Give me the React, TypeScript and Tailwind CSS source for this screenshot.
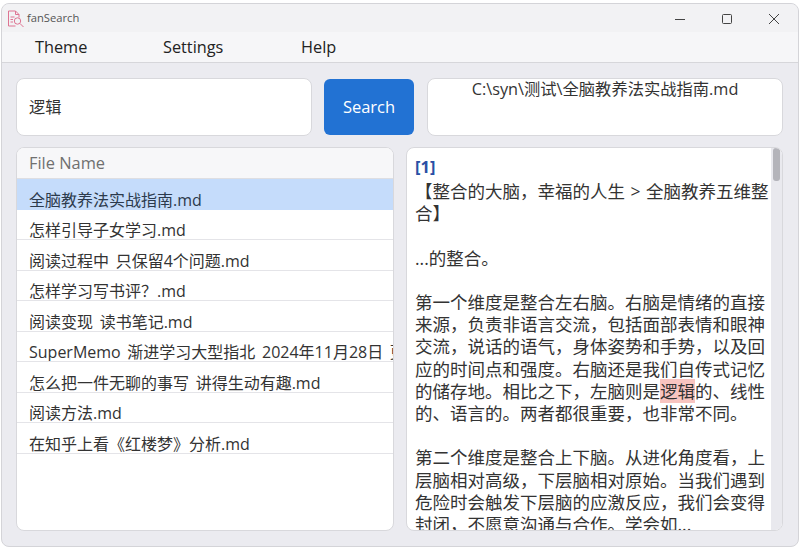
const cjk = '"Open Sans", "Noto Sans CJK SC", sans-serif';

const files = [
  '全脑教养法实战指南.md',
  '怎样引导子女学习.md',
  '阅读过程中 只保留4个问题.md',
  '怎样学习写书评？.md',
  '阅读变现 读书笔记.md',
  'SuperMemo 渐进学习大型指北 2024年11月28日 更新.md',
  '怎么把一件无聊的事写 讲得生动有趣.md',
  '阅读方法.md',
  '在知乎上看《红楼梦》分析.md',
];

function AppIcon() {
  return (
    <svg width="18" height="18" viewBox="0 0 18 18" fill="none" stroke="#de7492" strokeWidth="1">
      <path d="M1.500 1h7l3.500 3.500v3M8.500 1v3.500H12M1.500 1v15h7" />
      <path d="M3.500 7h4M3.500 9.500h2.500M3.500 12h2.500" />
      <circle cx="10.500" cy="11" r="3.200" />
      <path d="M13 13.500l3.500 3.500" />
    </svg>
  );
}

function WindowControls() {
  return (
    <div className="flex items-center text-[#444]">
      <svg width="12" height="12" viewBox="0 0 12 12" className="mr-[35px]" fill="none" stroke="currentColor">
        <path d="M1 6.500h10" />
      </svg>
      <svg width="12" height="12" viewBox="0 0 12 12" className="mr-[35px]" fill="none" stroke="currentColor">
        <rect x="1.500" y="1.500" width="9" height="9" rx="1" />
      </svg>
      <svg width="12" height="12" viewBox="0 0 12 12" className="mr-[18px]" fill="none" stroke="currentColor">
        <path d="M1 1l10 10M11 1L1 11" />
      </svg>
    </div>
  );
}

export default function App() {
  return (
    <div className="w-[800px] h-[552px] bg-white pt-[3px] px-[1px] pb-[5px] overflow-hidden" style={{ fontFamily: cjk }}>
      <div className="h-full flex flex-col rounded-lg border border-[#d4d4d8] bg-[#ebebf0] overflow-hidden">
        <div className="h-[28px] shrink-0 flex items-center justify-between bg-[#f2f2f4] pl-[5px] pt-[1px]">
          <div className="flex items-center gap-[2px]">
            <AppIcon />
            <span className="text-[11.2px] text-[#555]">fanSearch</span>
          </div>
          <WindowControls />
        </div>
        <div className="h-[31px] shrink-0 flex items-center bg-[#f6f6f8] border-b border-[#d6d6da] text-[16.3px] text-[#222]">
          <span className="ml-[33px] w-[128px]">Theme</span>
          <span className="w-[138px]">Settings</span>
          <span>Help</span>
        </div>
        <div className="flex-1 min-h-0 flex flex-col pl-[14px] pr-[15px] pt-[15px] pb-[15px]">
          <div className="h-[58px] shrink-0 flex">
            <div className="w-[296px] flex items-center rounded-lg border border-[#d8d8dc] bg-white pl-[12px] text-[16.2px] text-[#333]">
              逻辑
            </div>
            <div className="ml-[12px] w-[90px] my-[1px] flex items-center justify-center rounded-md bg-[#2272d3] text-[16.5px] text-white">
              Search
            </div>
            <div className="ml-[13px] flex-1 rounded-lg border border-[#d8d8dc] bg-white text-center text-[16.3px] leading-[20px] text-[#333]">
              C:\syn\测试\全脑教养法实战指南.md
            </div>
          </div>
          <div className="flex-1 min-h-0 mt-[11px] flex gap-[12px]">
            <div className="w-[378px] flex flex-col rounded-lg border border-[#d8d8dc] bg-white overflow-hidden">
              <div className="h-[31px] shrink-0 flex items-center bg-[#f7f7f9] pl-[12px] text-[16.4px] text-[#707070] border-b border-[#dedee2]">
                File Name
              </div>
              {files.map((name, i) => (
                <div
                  key={name}
                  className={`h-[30.5px] shrink-0 flex items-end pl-[12px] text-[16px] leading-[17px] [word-spacing:2.5px] whitespace-nowrap overflow-hidden border-b ${
                    i === 0 ? 'bg-[#c5dcfb] border-[#c5dcfb] text-[#2c3a4c]' : 'border-[#e4e4e8] text-[#333]'
                  }`}
                >
                  {name}
                </div>
              ))}
            </div>
            <div className="flex-1 min-w-0 flex rounded-lg border border-[#d8d8dc] bg-white overflow-hidden">
              <div className="flex-1 min-w-0 pl-[8px] pt-[8px] text-[17.5px] leading-[22.2px] text-[#333] overflow-hidden">
                <div className="h-[24px] text-[16.5px] font-bold text-[#2a4fa5]">[1]</div>
                <div className="[word-spacing:1px]">【整合的大脑，幸福的人生 &gt; 全脑教养五维整合】</div>
                <div className="h-[22.2px]" />
                <div>...的整合。</div>
                <div className="h-[22.2px]" />
                <div>
                  第一个维度是整合左右脑。右脑是情绪的直接来源，负责非语言交流，包括面部表情和眼神交流，说话的语气，身体姿势和手势，以及回应的时间点和强度。右脑还是我们自传式记忆的储存地。相比之下，左脑则是
                  <mark className="bg-[#f8c4c0] text-[#333]">逻辑</mark>
                  的、线性的、语言的。两者都很重要，也非常不同。
                </div>
                <div className="h-[22.2px]" />
                <div>第二个维度是整合上下脑。从进化角度看，上层脑相对高级，下层脑相对原始。当我们遇到危险时会触发下层脑的应激反应，我们会变得封闭，不愿意沟通与合作。学会如...</div>
              </div>
              <div className="w-[11px] shrink-0 bg-[#e9e9ee] px-[2px]">
                <div className="h-[33px] rounded-[3px] bg-[#b4b4ba]" />
              </div>
            </div>
          </div>
        </div>
      </div>
    </div>
  );
}
